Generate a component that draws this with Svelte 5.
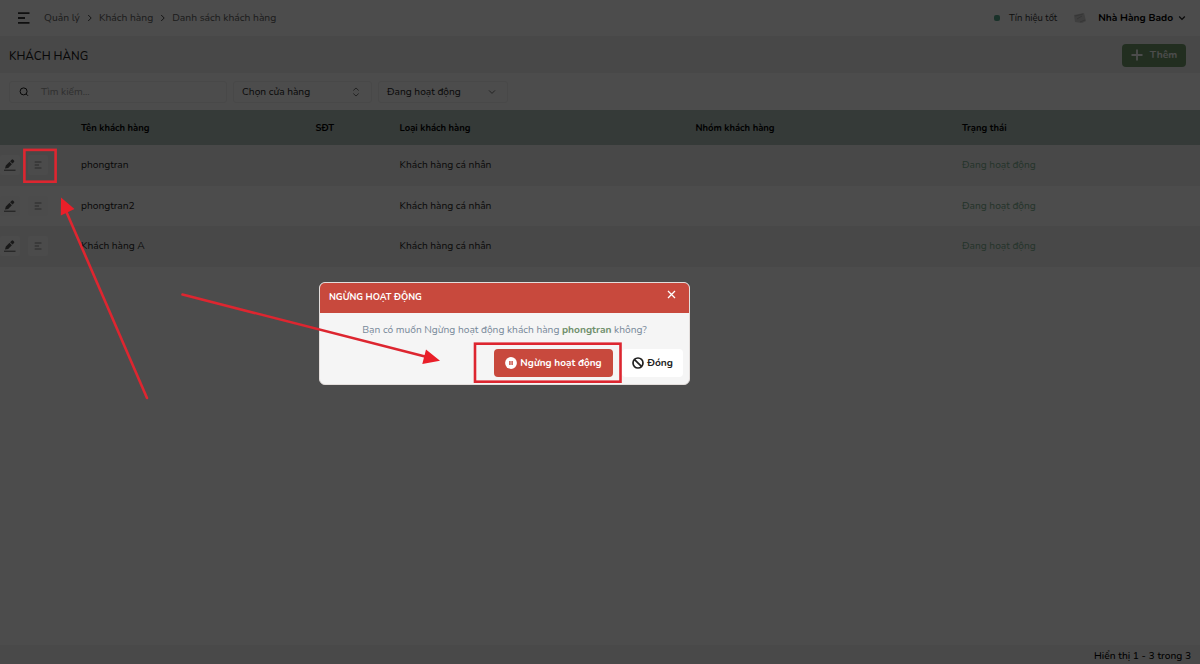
<script lang="ts">
	const crumbs = ['Quản lý', 'Khách hàng', 'Danh sách khách hàng'];

	const customers = [
		{ name: 'phongtran', phone: '', type: 'Khách hàng cá nhân', group: '', status: 'Đang hoạt động' },
		{ name: 'phongtran2', phone: '', type: 'Khách hàng cá nhân', group: '', status: 'Đang hoạt động' },
		{ name: 'Khách hàng A', phone: '', type: 'Khách hàng cá nhân', group: '', status: 'Đang hoạt động' }
	];
</script>

<div class="page">
	<header class="topbar">
		<svg class="burger" width="14" height="12" viewBox="0 0 14 12">
			<path d="M1 1.2h11.5M1 6h7M1 10.8h11.5" />
		</svg>
		<nav>
			{#each crumbs as crumb, i}
				{#if i > 0}
					<svg class="sep" width="6" height="8" viewBox="0 0 6 8"><path d="M1.2 1l3 3-3 3" /></svg>
				{/if}
				<span>{crumb}</span>
			{/each}
		</nav>
		<div class="account">
			<i class="dot"></i>
			<span class="signal">Tín hiệu tốt</span>
			<svg class="avatar" width="12" height="12" viewBox="0 0 12 12">
				<path d="M0 3l10-2 2 8-4 2-7-1z" fill="#d2d2d2" />
				<path d="M1 4l8-2M3 7l5-3M6 10l5-2" stroke="#b5b5b5" fill="none" />
			</svg>
			<b>Nhà Hàng Bado</b>
			<svg class="chevron" width="8" height="6" viewBox="0 0 8 6"><path d="M1.2 1.5L4 4.3l2.8-2.8" /></svg>
		</div>
	</header>

	<section class="titlebar">
		<h1>KHÁCH HÀNG</h1>
		<button class="add">
			<svg width="12" height="12" viewBox="0 0 12 12"><path d="M6 .5v11M.5 6h11" /></svg>
			<span>Thêm</span>
		</button>
	</section>

	<section class="filters">
		<div class="field search">
			<svg width="10" height="10" viewBox="0 0 10 10">
				<circle cx="4.6" cy="4.4" r="3.5" /><path d="M7.1 6.9L9 8.8" />
			</svg>
			<span class="query">Tìm kiếm...</span>
		</div>
		<div class="field store">
			<span>Chọn cửa hàng</span>
			<svg width="8" height="10" viewBox="0 0 8 10"><path d="M1.3 3.5L4 1l2.7 2.5M1.3 6.5L4 9l2.7-2.5" /></svg>
		</div>
		<div class="field state">
			<span>Đang hoạt động</span>
			<svg width="8" height="6" viewBox="0 0 8 6"><path d="M1 1.4l3 3 3-3" /></svg>
		</div>
	</section>

	<div class="table">
		<div class="row head">
			<span></span>
			<span>Tên khách hàng</span>
			<span>SĐT</span>
			<span>Loại khách hàng</span>
			<span>Nhóm khách hàng</span>
			<span>Trạng thái</span>
		</div>
		{#each customers as customer}
			<div class="row">
				<div class="actions">
					<span class="action edit">
						<svg width="12" height="12" viewBox="0 0 12 12">
							<path d="M1 9.6l.8-3.1 3.7-3.7 2.4 2.4-3.7 3.7zM6.1 2.2L7.6.7q.8-.7 1.6 0l.8.8q.7.8 0 1.6L8.5 4.6z" />
							<path d="M0 10.7h11.5v1H0z" />
						</svg>
					</span>
					<span class="action">
						<svg width="8" height="8" viewBox="0 0 8 8"><path d="M.7 1h6.8M.7 4h4.3M.7 7h6.8" /></svg>
					</span>
				</div>
				<span>{customer.name}</span>
				<span>{customer.phone}</span>
				<span>{customer.type}</span>
				<span>{customer.group}</span>
				<span class="status">{customer.status}</span>
			</div>
		{/each}
	</div>

	<footer><span>Hiển thị 1 - 3 trong 3</span></footer>
</div>

<div class="backdrop">
	<div class="dialog">
		<div class="dialog-head">
			<h2>NGỪNG HOẠT ĐỘNG</h2>
			<svg width="9" height="9" viewBox="0 0 9 9"><path d="M1 1l7 7M8 1L1 8" /></svg>
		</div>
		<p>Bạn có muốn Ngừng hoạt động khách hàng <b>phongtran</b> không?</p>
		<div class="buttons">
			<button class="stop">
				<svg width="12" height="12" viewBox="0 0 12 12">
					<circle cx="6" cy="6" r="5.9" fill="#fff" />
					<path d="M4.9 4v4M7.1 4v4" stroke="#c8493d" stroke-width="1.4" />
				</svg>
				<span>Ngừng hoạt động</span>
			</button>
			<button class="close">
				<svg width="12" height="12" viewBox="0 0 12 12">
					<path d="M2.3 2.3l7.4 7.4" stroke="#222" stroke-width="1.7" />
					<circle cx="6" cy="6" r="5" fill="none" stroke="#222" stroke-width="1.7" />
				</svg>
				<span>Đóng</span>
			</button>
		</div>
	</div>
</div>

<svg class="notes" width="1200" height="664" viewBox="0 0 1200 664">
	<rect x="24.4" y="149.9" width="31.2" height="31.8" />
	<rect x="475" y="343.7" width="145.5" height="38" />
	<path d="M147 398L66 211M182.5 294.5L425 356.5" stroke-linecap="round" />
	<path class="tip" d="M61 197.5l13.5 11.5-13.7 6.5zM440 360.8l-17.7 3.2 3.7-14.4z" />
</svg>

<style>
	:global(body) {
		overflow: hidden;
	}

	.page,
	.backdrop {
		font-family: Nunito, Lato, 'Noto Sans', sans-serif;
		font-size: 10.2px;
		line-height: 14px;
		color: #1c1c1c;
		white-space: nowrap;
	}

	.page {
		width: 1200px;
		height: 664px;
		display: flex;
		flex-direction: column;
		background: #fdfdfd;
	}

	svg {
		flex: none;
		fill: none;
		stroke: currentColor;
	}

	button {
		display: flex;
		align-items: center;
		border: 0;
		padding: 0;
		font: inherit;
	}

	.topbar {
		height: 36px;
		display: flex;
		align-items: center;
		padding-left: 17px;
	}

	.burger {
		stroke-width: 1.8;
		color: #333;
	}

	nav {
		display: flex;
		align-items: center;
		margin-left: 13px;
		font-size: 10.3px;
		color: #606060;
	}

	.sep {
		margin: 0 6px 0 7px;
		color: #444;
	}

	.account {
		display: flex;
		align-items: center;
		margin-left: auto;
		padding-right: 14px;
	}

	.dot {
		width: 6px;
		height: 6px;
		border-radius: 2px;
		margin-right: 9px;
		background: #59a98c;
	}

	.signal {
		font-size: 9.5px;
		color: #333;
	}

	.avatar {
		margin: 0 12px 0 17px;
		stroke: none;
	}

	.account b {
		color: #000;
	}

	.chevron {
		margin-left: 5px;
		stroke-width: 1.2;
	}

	.titlebar {
		height: 36px;
		display: flex;
		align-items: center;
		justify-content: space-between;
		padding: 1px 14px 0 9px;
		background: #f0f0f0;
	}

	h1,
	h2 {
		margin: 0;
		font-weight: 500;
	}

	h1 {
		padding-top: 1px;
		font-size: 11.7px;
	}

	.add {
		width: 64px;
		height: 23px;
		justify-content: center;
		gap: 7px;
		border-radius: 4px;
		background: #729c6d;
		color: #fff;
		font-weight: 700;
	}

	.add svg {
		stroke-width: 1.8;
	}

	.filters {
		height: 37px;
		display: flex;
		align-items: center;
		gap: 6px;
		padding-left: 9px;
		box-sizing: border-box;
	}

	.field {
		display: flex;
		align-items: center;
		justify-content: space-between;
		height: 22px;
		box-sizing: border-box;
		border: 1px solid #f0f0f0;
		border-radius: 3px;
		padding: 0 11px 0 8px;
	}

	.search {
		width: 218px;
		justify-content: flex-start;
		gap: 12px;
		padding-left: 9px;
	}

	.query {
		color: #a0a0a0;
	}

	.store {
		width: 139px;
	}

	.state {
		width: 130px;
	}

	.field:not(.search) svg {
		color: #777;
	}

	.row {
		height: 40.6px;
		display: grid;
		grid-template-columns: 81px 234.5px 84px 296px 266.5px 1fr;
		align-items: center;
	}

	.row:nth-child(even) {
		background: #f2f2f2;
	}

	.row.head {
		height: 35px;
		background: #b1c1bb;
		color: #000;
		font-size: 9.45px;
		font-weight: 700;
	}

	.actions {
		display: flex;
		gap: 8px;
	}

	.action {
		width: 20px;
		height: 20px;
		display: grid;
		place-items: center;
		border-radius: 2px;
		background: #fbfbfb;
		color: #888;
	}

	.edit svg {
		fill: #555;
		stroke: none;
	}

	.status {
		color: #7aae8e;
	}

	footer {
		height: 19px;
		display: flex;
		align-items: center;
		justify-content: flex-end;
		margin-top: auto;
		padding: 3px 9px 0 0;
		box-sizing: border-box;
		background: #f5f5f5;
		color: #000;
		font-weight: 500;
	}

	.backdrop {
		position: absolute;
		inset: 0;
		height: 664px;
		background: rgba(0, 0, 0, 0.7);
	}

	.dialog {
		width: 371px;
		height: 103px;
		margin: 281.5px 0 0 319px;
		box-sizing: border-box;
		border: 1px solid #e3dedc;
		border-radius: 6px;
		overflow: hidden;
		background: #f5f5f5;
	}

	.dialog-head {
		height: 30px;
		display: flex;
		align-items: center;
		justify-content: space-between;
		padding: 0 13px 0 9px;
		background: #c8493d;
		color: #fff;
	}

	h2 {
		margin-bottom: 1px;
		font-size: 9.2px;
		font-weight: 700;
	}

	.dialog-head svg {
		margin-bottom: 7px;
		stroke-width: 1.3;
	}

	p {
		margin: 10px 0 12px;
		text-align: center;
		color: #778899;
	}

	p b {
		color: #6f8f6b;
	}

	.buttons {
		display: flex;
		justify-content: flex-end;
		gap: 9px;
		padding-right: 6px;
	}

	.buttons button {
		height: 28px;
		justify-content: center;
		gap: 3px;
		border-radius: 4px;
		font-weight: 700;
	}

	.buttons svg {
		stroke: none;
	}

	.stop {
		width: 119px;
		background: #c8493d;
		color: #fff;
	}

	.close {
		width: 61px;
		background: #fff;
		color: #222;
	}

	.buttons .stop {
		font-size: 10px;
	}

	.notes {
		position: absolute;
		top: 0;
		left: 0;
		stroke: #dd2630;
		stroke-width: 2.6;
		pointer-events: none;
	}

	.tip {
		fill: #e91f29;
		stroke: none;
	}
</style>
